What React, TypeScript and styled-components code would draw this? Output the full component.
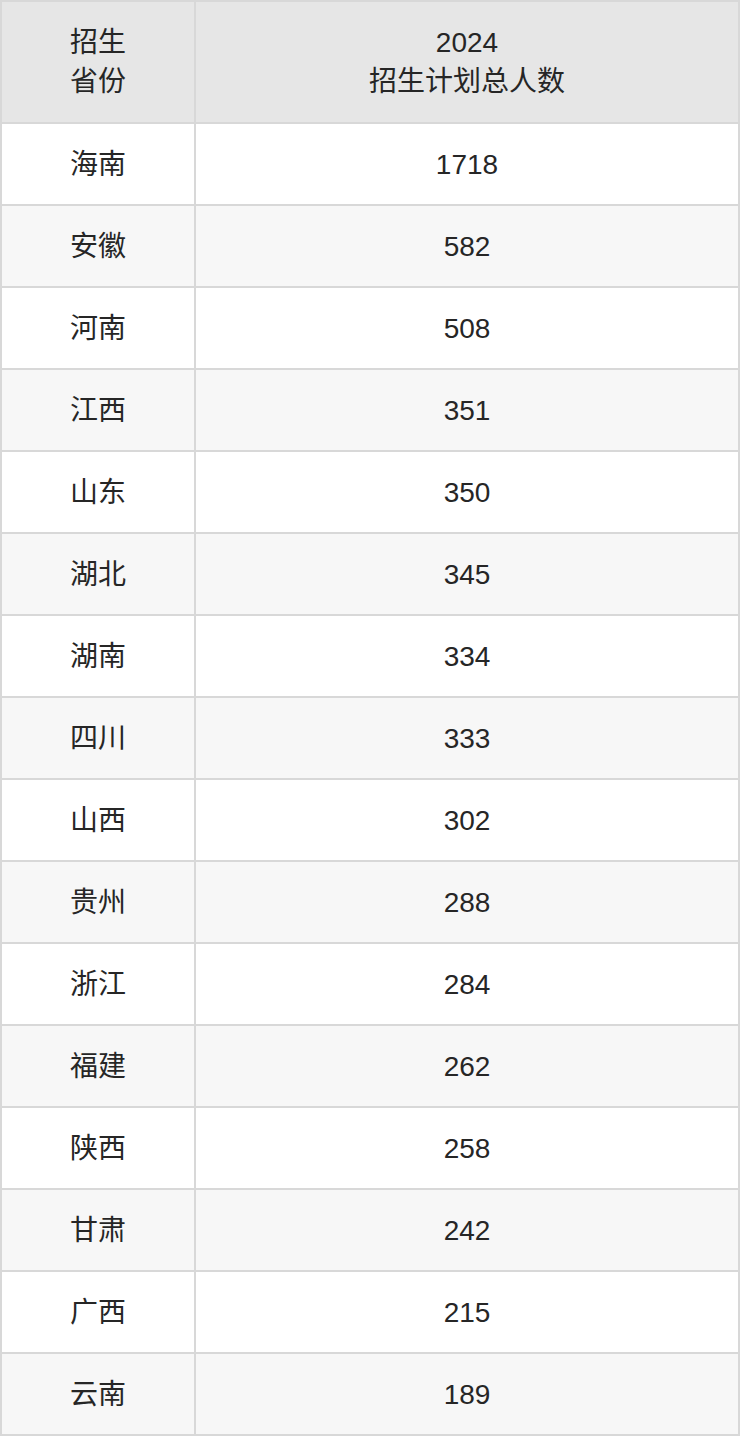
import React from "react";
import styled, { createGlobalStyle } from "styled-components";

const Global = createGlobalStyle`
  html, body { margin: 0; padding: 0; background: #ffffff; }
  body { font-family: "Liberation Sans", "Noto Sans CJK SC", sans-serif; }
`;

const Table = styled.div`
  width: 740px;
  box-sizing: border-box;
  display: grid;
  grid-template-columns: 192px 1fr;
  gap: 2px;
  padding: 2px;
  background: #d8d8d8;
`;

const Cell = styled.div<{ $head?: boolean; $alt?: boolean }>`
  display: flex;
  flex-direction: column;
  align-items: center;
  justify-content: center;
  height: ${(p) => (p.$head ? "120px" : "80px")};
  background: ${(p) => (p.$head ? "#e6e6e6" : p.$alt ? "#f7f7f7" : "#ffffff")};
  color: #262626;
  font-size: 28px;
  line-height: 39px;
  text-align: center;
`;

const rows: [string, string][] = [
  ["海南", "1718"],
  ["安徽", "582"],
  ["河南", "508"],
  ["江西", "351"],
  ["山东", "350"],
  ["湖北", "345"],
  ["湖南", "334"],
  ["四川", "333"],
  ["山西", "302"],
  ["贵州", "288"],
  ["浙江", "284"],
  ["福建", "262"],
  ["陕西", "258"],
  ["甘肃", "242"],
  ["广西", "215"],
  ["云南", "189"],
];

export default function App() {
  return (
    <>
      <Global />
      <Table>
        <Cell $head>
          <span>招生</span>
          <span>省份</span>
        </Cell>
        <Cell $head>
          <span>2024</span>
          <span>招生计划总人数</span>
        </Cell>
        {rows.map(([p, n], i) => (
          <React.Fragment key={p}>
            <Cell $alt={i % 2 === 1}>{p}</Cell>
            <Cell $alt={i % 2 === 1}>{n}</Cell>
          </React.Fragment>
        ))}
      </Table>
    </>
  );
}
